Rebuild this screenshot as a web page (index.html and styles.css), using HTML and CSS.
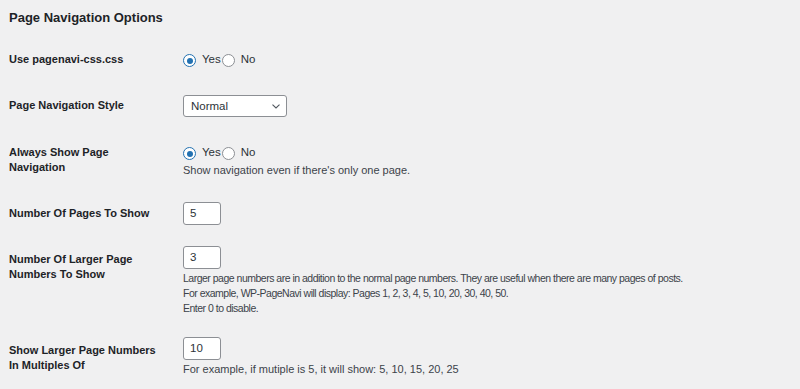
FILE: index.html
```html
<!DOCTYPE html>
<html lang="en">
<head>
<meta charset="utf-8">
<title>Page Navigation Options</title>
<link rel="stylesheet" href="styles.css">
</head>
<body>
<div class="wrap">
  <h2 class="title">Page Navigation Options</h2>
  <div class="form-table">
    <div class="row">
      <div class="th">Use pagenavi-css.css</div>
      <div class="td td-radio">
        <label class="opt"><span class="radio checked"></span>Yes</label><label class="opt"><span class="radio"></span>No</label>
      </div>
    </div>
    <div class="row">
      <div class="th">Page Navigation Style</div>
      <div class="td td-select">
        <div class="select">
          <span>Normal</span>
          <svg class="chev" width="8" height="5" viewBox="0 0 8 5"><path d="M0.5 0.7 L4 4 L7.5 0.7" fill="none" stroke="#50575e" stroke-width="1.1"/></svg>
        </div>
      </div>
    </div>
    <div class="row">
      <div class="th">Always Show Page<br>Navigation</div>
      <div class="td td-radio">
        <label class="opt"><span class="radio checked"></span>Yes</label><label class="opt"><span class="radio"></span>No</label>
        <p class="desc">Show navigation even if there's only one page.</p>
      </div>
    </div>
    <div class="row">
      <div class="th">Number Of Pages To Show</div>
      <div class="td td-input">
        <div class="input">5</div>
      </div>
    </div>
    <div class="row">
      <div class="th">Number Of Larger Page<br>Numbers To Show</div>
      <div class="td td-input2">
        <div class="input">3</div>
        <p class="desc narrow">Larger page numbers are in addition to the normal page numbers. They are useful when there are many pages of posts.<br>For example, WP-PageNavi will display: Pages 1, 2, 3, 4, 5, 10, 20, 30, 40, 50.<br>Enter 0 to disable.</p>
      </div>
    </div>
    <div class="row">
      <div class="th">Show Larger Page Numbers<br>In Multiples Of</div>
      <div class="td td-input2">
        <div class="input">10</div>
        <p class="desc">For example, if mutiple is 5, it will show: 5, 10, 15, 20, 25</p>
      </div>
    </div>
  </div>
</div>
</body>
</html>
```
FILE: styles.css
```css
html, body {
  margin: 0;
  padding: 0;
  background: #f0f0f1;
}
body {
  font-family: "Liberation Sans", Arial, sans-serif;
  color: #1d2327;
  font-size: 11px;
}
.wrap {
  padding: 9px 9px 0;
}
.title {
  margin: 0 0 9px;
  font-size: 13px;
  line-height: 18px;
  font-weight: bold;
  color: #1d2327;
}
.row {
  display: grid;
  grid-template-columns: 174px 1fr;
  align-items: start;
}
.th {
  padding: 16px 0 15px;
  font-weight: bold;
  font-size: 11px;
  line-height: 15px;
  color: #1d2327;
}
.td {
  line-height: 15px;
}
.td-radio {
  padding-top: 16px;
}
.td-select {
  padding: 13px 0 12px;
}
.td-input {
  padding-top: 12px;
}
.td-input2 {
  padding: 10px 0 11px;
}
.opt {
  display: inline-flex;
  align-items: center;
  color: #2c3338;
  font-size: 11.5px;
}
.opt + .opt {
  margin-left: 1px;
}
.radio {
  box-sizing: border-box;
  width: 13px;
  height: 13px;
  border: 1px solid #8c8f94;
  border-radius: 50%;
  background: #fff;
  margin-right: 6px;
  position: relative;
  top: 1px;
}
.radio.checked {
  border-color: #2271b1;
}
.radio.checked::after {
  content: "";
  position: absolute;
  left: 2.5px;
  top: 2.5px;
  width: 6px;
  height: 6px;
  border-radius: 50%;
  background: #2271b1;
}
.desc {
  margin: 0;
  color: #3c434a;
  font-size: 11px;
  line-height: 15px;
}
.td-input2 .desc {
  margin-top: 2px;
}
.narrow {
  font-size: 10.5px;
  letter-spacing: -0.5px;
  line-height: 15px;
}
.select {
  box-sizing: border-box;
  width: 104px;
  height: 22px;
  border: 1px solid #8c8f94;
  border-radius: 3px;
  background: #fff;
  display: flex;
  align-items: center;
  justify-content: space-between;
  padding: 0 6px 0 7px;
  font-size: 11.5px;
  color: #2c3338;
}
.input {
  box-sizing: border-box;
  width: 38px;
  height: 23px;
  border: 1px solid #8c8f94;
  border-radius: 3px;
  background: #fff;
  padding: 0 6px;
  line-height: 21px;
  font-size: 11.5px;
  color: #2c3338;
}
```
